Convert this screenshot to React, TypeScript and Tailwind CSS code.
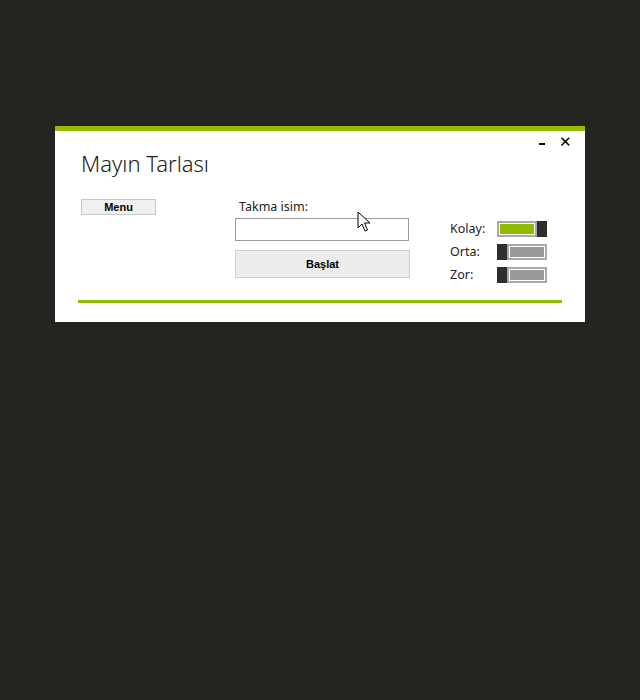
import { useState } from 'react';

const GREEN = '#8fbc00';

function Toggle({ on }: { on: boolean }) {
  return (
    <div className="flex h-[16px] w-[50px]">
      {!on && <div className="w-[10px] h-full bg-[#2e2e2e]" />}
      <div className="flex-1 h-full border-2 border-[#a8a8a8] p-px bg-white">
        <div className={on ? 'w-full h-full bg-[#8fbc00]' : 'w-full h-full bg-[#999999]'} />
      </div>
      {on && <div className="w-[10px] h-full bg-[#2e2e2e]" />}
    </div>
  );
}

function Cursor() {
  return (
    <svg className="absolute left-[357px] top-[211px]" width="14" height="22" viewBox="0 0 14 22">
      <path
        d="M1 1 L1 17 L5 13 L8 20 L10.5 19 L7.5 12 L13 12 Z"
        fill="#ffffff"
        stroke="#000000"
        strokeWidth="1"
        strokeLinejoin="miter"
      />
    </svg>
  );
}

export default function App() {
  const [levels] = useState([
    { name: 'Kolay:', on: true },
    { name: 'Orta:', on: false },
    { name: 'Zor:', on: false },
  ]);

  return (
    <div
      className="relative w-[640px] h-[700px] bg-[#23231f] pt-[126px] pl-[55px]"
      style={{ fontFamily: '"Noto Sans", "Open Sans", sans-serif' }}
    >
      <div className="w-[530px] h-[196px] bg-white border-t-[5px] border-[#8fbc00] flex flex-col">
        {/* window buttons */}
        <div className="flex justify-end items-start gap-[14px] pr-[13px] pt-[3px] h-[18px]">
          <div className="mt-[9px] w-[6px] h-[2px] bg-black" />
          <span className="text-[15px] leading-[14px] text-black">✕</span>
        </div>

        <h1 className="pl-[26px] -mt-[1px] text-[22px] leading-[30px] font-light text-[#222]">Mayın Tarlası</h1>

        <div className="flex pl-[26px] mt-[21px]">
          <button
            className="w-[75px] h-[16px] bg-[#f0f0f0] border border-[#c8c8c8] text-[11px] leading-[14px] font-bold text-black"
            style={{ fontFamily: '"Liberation Sans", Arial, sans-serif' }}
          >
            Menu
          </button>

          <div className="ml-[79px] w-[175px] flex flex-col">
            <label className="pl-[4px] text-[12.5px] leading-[16px] text-[#222]">Takma isim:</label>
            <input className="mt-[3px] h-[23px] w-[174px] border border-[#9a9a9a] bg-white outline-none" />
            <button
              className="mt-[9px] h-[28px] w-[175px] bg-[#ececec] border border-[#cfcfcf] text-[11px] font-bold text-black"
              style={{ fontFamily: '"Liberation Sans", Arial, sans-serif' }}
            >
              Başlat
            </button>
          </div>

          <div className="ml-[40px] mt-[22px] flex flex-col gap-[7px]">
            {levels.map((l) => (
              <div key={l.name} className="flex items-center h-[16px]">
                <span className="w-[47px] text-[12.5px] leading-[16px] text-[#222]">{l.name}</span>
                <Toggle on={l.on} />
              </div>
            ))}
          </div>
        </div>

        <div className="mx-[23px] mt-[17px] h-[3px]" style={{ backgroundColor: GREEN }} />
      </div>
      <Cursor />
    </div>
  );
}
